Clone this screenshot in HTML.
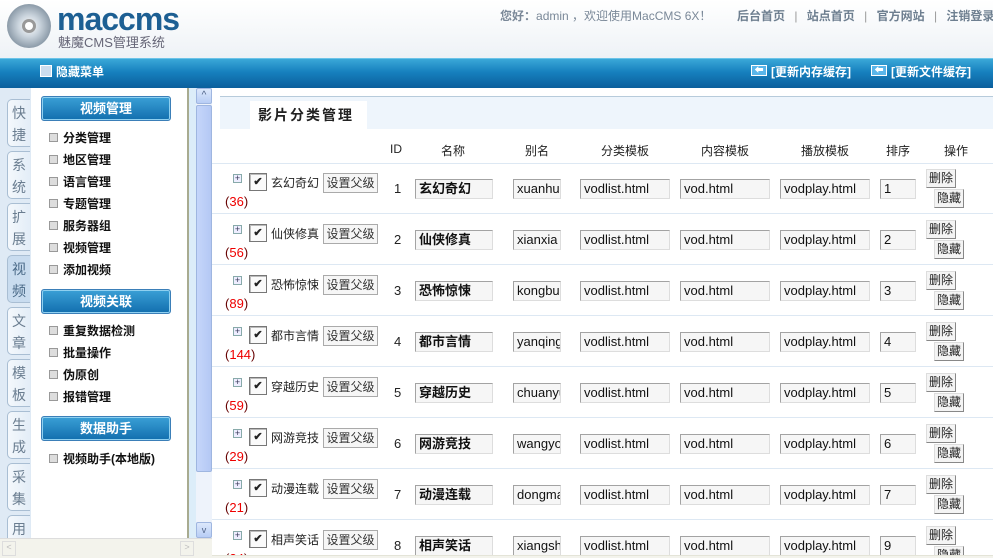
<!DOCTYPE html>
<html><head><meta charset="utf-8"><style>
*{margin:0;padding:0;box-sizing:border-box}
html,body{width:993px;height:558px;overflow:hidden}
body{position:relative;background:#fff;font-family:"Liberation Sans","Noto Sans CJK SC",sans-serif;font-size:12px;color:#222}
.a{position:absolute}
#hd{left:0;top:0;width:993px;height:58px;background:linear-gradient(#fff,#eef2f6)}
#bar{left:0;top:58px;width:993px;height:30px;background:linear-gradient(#3aa8d8,#1680be 45%,#0b5f9c);border-top:1px solid #6cc4e8}
#tabs{left:0;top:88px;width:31px;height:450px;background:#dfeaf5}
.tab{position:absolute;left:7px;width:23px;height:48px;border:1px solid #a9bed3;border-right:none;border-radius:5px 0 0 5px;background:linear-gradient(90deg,#f4f8fc,#e3edf7);color:#6a7d90;font-size:14px;line-height:22px;text-align:center;padding-top:2px}
#menu{left:31px;top:88px;width:158px;height:450px;background:#fff;border-right:2px solid #a8ab90}
.mh{position:absolute;left:10px;width:130px;height:25px;border:1px solid #3b7fb8;border-radius:3px;background:linear-gradient(#3aa0d6,#126eae);color:#fff;font-weight:bold;font-size:13px;text-align:center;line-height:23px;box-shadow:inset 0 0 0 1px #8fd0f0}
.mi{position:absolute;left:18px;font-size:12px;font-weight:bold;color:#111}
.mi:before{content:"";display:inline-block;width:7px;height:7px;border:1px solid #999;background:#ddd;margin-right:5px;vertical-align:0}
#sg{left:189px;top:88px;width:8px;height:450px;background:#dcedf9}
#sb{left:196px;top:88px;width:16px;height:450px;background:#eef3fb}
#hs{left:0;top:538px;width:212px;height:20px;background:#f3f3ec;border-top:1px solid #ddd}
.in{position:absolute;height:20px;border:1px solid #a3a3a3;border-right-color:#ddd;border-bottom-color:#ddd;background:#f6f6f6;font-size:13px;line-height:18px;padding-left:3px;overflow:hidden;white-space:nowrap;color:#111}
.th{position:absolute;top:142px;font-size:12px;color:#222}
.row{position:absolute;left:212px;width:781px;height:51px;border-bottom:1px solid #dde8f3}
.btn{position:absolute;height:19px;border:1px solid #888;border-top-color:#ddd;border-left-color:#ddd;background:#f4f4f4;font-size:12px;line-height:17px;padding:0 2px}
.r{position:absolute;left:0;width:993px;height:51px}
.pl{position:absolute;left:233px;top:11px;width:9px;height:9px;border:1px solid #8aa;background:#eef;font-size:9px;line-height:7px;text-align:center;color:#335}
.cb{position:absolute;left:249px;top:10px;width:18px;height:18px;border:1px solid #777;background:#fafafa;box-shadow:inset 1px 1px 0 #bbb;font-size:11px;line-height:16px;text-align:center;font-weight:bold;overflow:hidden}
.nm{position:absolute;left:271px;top:11px;font-size:12px}
.sp{position:absolute;left:323px;top:10px;width:55px;height:20px;border:1px solid #aaa;background:#f6f6f6;font-size:12px;line-height:18px;text-align:center;color:#333;white-space:nowrap;overflow:hidden}
.ct{position:absolute;left:225px;top:31px;color:#e00;font-size:13px}
.ct b{color:#600;font-weight:normal}
.id{position:absolute;left:394px;top:18px;font-size:13px}
</style></head><body>
<div id="hd" class="a">
 <svg class="a" style="left:5px;top:2px" width="50" height="50"><defs><radialGradient id="g"><stop offset="0" stop-color="#fff"/><stop offset=".5" stop-color="#c9d3dc"/><stop offset="1" stop-color="#8b9aa8"/></radialGradient></defs><circle cx="24" cy="24" r="22" fill="url(#g)"/><circle cx="24" cy="24" r="7" fill="#999"/><circle cx="24" cy="24" r="4" fill="#fff"/></svg>
 <div class="a" style="left:57px;top:1px;font:bold 32px 'Liberation Sans',sans-serif;color:#1d5f93;letter-spacing:-1px">maccms</div>
 <div class="a" style="left:58px;top:32px;font-size:13px;color:#667;white-space:nowrap">魅魔CMS管理系统</div>
 <div class="a" style="left:500px;top:7px;font-size:12px;color:#7a8898;white-space:nowrap"><b>您好：</b>admin ，欢迎使用MacCMS 6X！</div>
 <div class="a" style="left:737px;top:7px;font-size:12px;color:#6e7f90;font-weight:bold;word-spacing:6px;white-space:nowrap">后台首页 <span style="color:#999;font-weight:normal">|</span> 站点首页 <span style="color:#999;font-weight:normal">|</span> 官方网站 <span style="color:#999;font-weight:normal">|</span> 注销登录</div>
</div>
<div id="bar" class="a">
 <div class="a" style="left:40px;top:6px;width:12px;height:12px;border:1px solid #fff;background:#cde"></div>
 <div class="a" style="left:56px;top:4px;color:#fff;font-weight:bold;font-size:12px">隐藏菜单</div>
 <div class="a" style="left:751px;top:6px;width:16px;height:11px;background:#5ab6ea;border:1px solid #fff;color:#fff;font-size:9px;line-height:9px;text-align:center">⬅</div>
 <div class="a" style="left:771px;top:4px;color:#fff;font-weight:bold;font-size:12px">[更新内存缓存]</div>
 <div class="a" style="left:871px;top:6px;width:16px;height:11px;background:#5ab6ea;border:1px solid #fff;color:#fff;font-size:9px;line-height:9px;text-align:center">⬅</div>
 <div class="a" style="left:891px;top:4px;color:#fff;font-weight:bold;font-size:12px">[更新文件缓存]</div>
</div>
<div id="tabs" class="a">
 <div class="tab" style="top:11px">快<br>捷</div>
 <div class="tab" style="top:63px">系<br>统</div>
 <div class="tab" style="top:115px">扩<br>展</div>
 <div class="tab" style="top:167px;background:#c9dcef;color:#4a6a88">视<br>频</div>
 <div class="tab" style="top:219px">文<br>章</div>
 <div class="tab" style="top:271px">模<br>板</div>
 <div class="tab" style="top:323px">生<br>成</div>
 <div class="tab" style="top:375px">采<br>集</div>
 <div class="tab" style="top:427px">用<br>户</div>
</div>
<div id="menu" class="a">
 <div class="mh" style="top:8px">视频管理</div>
 <div class="mi" style="top:41px">分类管理</div>
 <div class="mi" style="top:63px">地区管理</div>
 <div class="mi" style="top:85px">语言管理</div>
 <div class="mi" style="top:107px">专题管理</div>
 <div class="mi" style="top:129px">服务器组</div>
 <div class="mi" style="top:151px">视频管理</div>
 <div class="mi" style="top:173px">添加视频</div>
 <div class="mh" style="top:201px">视频关联</div>
 <div class="mi" style="top:234px">重复数据检测</div>
 <div class="mi" style="top:256px">批量操作</div>
 <div class="mi" style="top:278px">伪原创</div>
 <div class="mi" style="top:300px">报错管理</div>
 <div class="mh" style="top:328px">数据助手</div>
 <div class="mi" style="top:362px">视频助手(本地版)</div>
</div>
<div id="sg" class="a"></div>
<div id="sb" class="a">
 <div class="a" style="left:0;top:0;width:16px;height:16px;background:linear-gradient(#dce8fb,#b8cdf5);border:1px solid #9fb6e0;border-radius:2px;color:#4d6185;font-size:10px;text-align:center;line-height:14px">^</div>
 <div class="a" style="left:0;top:17px;width:16px;height:367px;background:linear-gradient(90deg,#c5d6fa,#b4c8f4);border:1px solid #9fb6e0;border-radius:2px"></div>
 <div class="a" style="left:0;top:434px;width:16px;height:16px;background:linear-gradient(#dce8fb,#b8cdf5);border:1px solid #9fb6e0;border-radius:2px;color:#4d6185;font-size:9px;text-align:center;line-height:14px">v</div>
</div>
<div id="hs" class="a">
 <div class="a" style="left:2px;top:2px;width:14px;height:15px;border:1px solid #ddd;color:#bbb;font-size:9px;text-align:center">&lt;</div>
 <div class="a" style="left:180px;top:2px;width:14px;height:15px;border:1px solid #ddd;color:#bbb;font-size:9px;text-align:center">&gt;</div>
</div>
<div class="a" style="left:220px;top:96px;width:773px;height:33px;background:#eef5fc;border-top:1px solid #b7cbdb"></div>
<div class="a" style="left:250px;top:101px;width:117px;height:28px;background:#fff;font-weight:bold;font-size:14px;letter-spacing:2px;padding:4px 0 0 8px;color:#222">影片分类管理</div>
<div class="th" style="left:390px">ID</div>
<div class="th" style="left:441px">名称</div>
<div class="th" style="left:525px">别名</div>
<div class="th" style="left:601px">分类模板</div>
<div class="th" style="left:701px">内容模板</div>
<div class="th" style="left:801px">播放模板</div>
<div class="th" style="left:886px">排序</div>
<div class="th" style="left:944px">操作</div>
<div class="a" style="left:212px;top:163px;width:781px;border-top:1px solid #dde8f3"></div>

<div class="row" style="top:163px"></div><div class="row" style="top:214px"></div><div class="row" style="top:265px"></div><div class="row" style="top:316px"></div><div class="row" style="top:367px"></div><div class="row" style="top:418px"></div><div class="row" style="top:469px"></div>

<div class="r" style="top:163px"><div class="pl">+</div><div class="cb">✔</div><div class="nm">玄幻奇幻</div><div class="sp">设置父级</div><div class="ct"><b>(</b>36<b>)</b></div><div class="id">1</div><div class="in" style="left:415px;top:16px;width:78px;font-weight:bold">玄幻奇幻</div><div class="in" style="left:513px;top:16px;width:48px">xuanhuan</div><div class="in" style="left:580px;top:16px;width:90px">vodlist.html</div><div class="in" style="left:680px;top:16px;width:90px">vod.html</div><div class="in" style="left:780px;top:16px;width:90px">vodplay.html</div><div class="in" style="left:880px;top:16px;width:36px">1</div><div class="btn" style="left:926px;top:6px">删除</div><div class="btn" style="left:934px;top:26px">隐藏</div></div>
<div class="r" style="top:214px"><div class="pl">+</div><div class="cb">✔</div><div class="nm">仙侠修真</div><div class="sp">设置父级</div><div class="ct"><b>(</b>56<b>)</b></div><div class="id">2</div><div class="in" style="left:415px;top:16px;width:78px;font-weight:bold">仙侠修真</div><div class="in" style="left:513px;top:16px;width:48px">xianxia</div><div class="in" style="left:580px;top:16px;width:90px">vodlist.html</div><div class="in" style="left:680px;top:16px;width:90px">vod.html</div><div class="in" style="left:780px;top:16px;width:90px">vodplay.html</div><div class="in" style="left:880px;top:16px;width:36px">2</div><div class="btn" style="left:926px;top:6px">删除</div><div class="btn" style="left:934px;top:26px">隐藏</div></div>
<div class="r" style="top:265px"><div class="pl">+</div><div class="cb">✔</div><div class="nm">恐怖惊悚</div><div class="sp">设置父级</div><div class="ct"><b>(</b>89<b>)</b></div><div class="id">3</div><div class="in" style="left:415px;top:16px;width:78px;font-weight:bold">恐怖惊悚</div><div class="in" style="left:513px;top:16px;width:48px">kongbu</div><div class="in" style="left:580px;top:16px;width:90px">vodlist.html</div><div class="in" style="left:680px;top:16px;width:90px">vod.html</div><div class="in" style="left:780px;top:16px;width:90px">vodplay.html</div><div class="in" style="left:880px;top:16px;width:36px">3</div><div class="btn" style="left:926px;top:6px">删除</div><div class="btn" style="left:934px;top:26px">隐藏</div></div>
<div class="r" style="top:316px"><div class="pl">+</div><div class="cb">✔</div><div class="nm">都市言情</div><div class="sp">设置父级</div><div class="ct"><b>(</b>144<b>)</b></div><div class="id">4</div><div class="in" style="left:415px;top:16px;width:78px;font-weight:bold">都市言情</div><div class="in" style="left:513px;top:16px;width:48px">yanqing</div><div class="in" style="left:580px;top:16px;width:90px">vodlist.html</div><div class="in" style="left:680px;top:16px;width:90px">vod.html</div><div class="in" style="left:780px;top:16px;width:90px">vodplay.html</div><div class="in" style="left:880px;top:16px;width:36px">4</div><div class="btn" style="left:926px;top:6px">删除</div><div class="btn" style="left:934px;top:26px">隐藏</div></div>
<div class="r" style="top:367px"><div class="pl">+</div><div class="cb">✔</div><div class="nm">穿越历史</div><div class="sp">设置父级</div><div class="ct"><b>(</b>59<b>)</b></div><div class="id">5</div><div class="in" style="left:415px;top:16px;width:78px;font-weight:bold">穿越历史</div><div class="in" style="left:513px;top:16px;width:48px">chuanyue</div><div class="in" style="left:580px;top:16px;width:90px">vodlist.html</div><div class="in" style="left:680px;top:16px;width:90px">vod.html</div><div class="in" style="left:780px;top:16px;width:90px">vodplay.html</div><div class="in" style="left:880px;top:16px;width:36px">5</div><div class="btn" style="left:926px;top:6px">删除</div><div class="btn" style="left:934px;top:26px">隐藏</div></div>
<div class="r" style="top:418px"><div class="pl">+</div><div class="cb">✔</div><div class="nm">网游竞技</div><div class="sp">设置父级</div><div class="ct"><b>(</b>29<b>)</b></div><div class="id">6</div><div class="in" style="left:415px;top:16px;width:78px;font-weight:bold">网游竞技</div><div class="in" style="left:513px;top:16px;width:48px">wangyou</div><div class="in" style="left:580px;top:16px;width:90px">vodlist.html</div><div class="in" style="left:680px;top:16px;width:90px">vod.html</div><div class="in" style="left:780px;top:16px;width:90px">vodplay.html</div><div class="in" style="left:880px;top:16px;width:36px">6</div><div class="btn" style="left:926px;top:6px">删除</div><div class="btn" style="left:934px;top:26px">隐藏</div></div>
<div class="r" style="top:469px"><div class="pl">+</div><div class="cb">✔</div><div class="nm">动漫连载</div><div class="sp">设置父级</div><div class="ct"><b>(</b>21<b>)</b></div><div class="id">7</div><div class="in" style="left:415px;top:16px;width:78px;font-weight:bold">动漫连载</div><div class="in" style="left:513px;top:16px;width:48px">dongman</div><div class="in" style="left:580px;top:16px;width:90px">vodlist.html</div><div class="in" style="left:680px;top:16px;width:90px">vod.html</div><div class="in" style="left:780px;top:16px;width:90px">vodplay.html</div><div class="in" style="left:880px;top:16px;width:36px">7</div><div class="btn" style="left:926px;top:6px">删除</div><div class="btn" style="left:934px;top:26px">隐藏</div></div>
<div class="r" style="top:520px;height:38px;overflow:hidden"><div class="pl">+</div><div class="cb">✔</div><div class="nm">相声笑话</div><div class="sp">设置父级</div><div class="ct"><b>(</b>24<b>)</b></div><div class="id">8</div><div class="in" style="left:415px;top:16px;width:78px;font-weight:bold">相声笑话</div><div class="in" style="left:513px;top:16px;width:48px">xiangsheng</div><div class="in" style="left:580px;top:16px;width:90px">vodlist.html</div><div class="in" style="left:680px;top:16px;width:90px">vod.html</div><div class="in" style="left:780px;top:16px;width:90px">vodplay.html</div><div class="in" style="left:880px;top:16px;width:36px">9</div><div class="btn" style="left:926px;top:6px">删除</div><div class="btn" style="left:934px;top:26px">隐藏</div></div>
<div class="a" style="left:212px;top:555px;width:781px;height:3px;background:#f3f3ec;border-top:1px solid #e4e4d8"></div>
</body></html>
